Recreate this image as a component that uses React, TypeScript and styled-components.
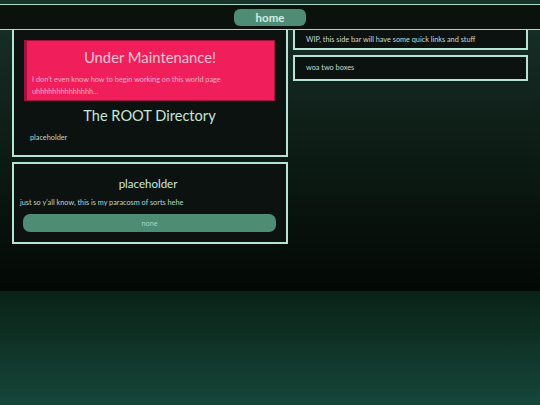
import styled, { createGlobalStyle } from "styled-components"

const GlobalStyle = createGlobalStyle`
    html {
        min-height: 100%;
        background: linear-gradient(
            to bottom,
            #18322b 0px,
            #0f2019 120px,
            #030805 291px,
            #0a2216 291px,
            #16463a 405px
        );
        background-repeat: no-repeat;
    }
    body {
        margin: 0;
        font-family: Lato, "Noto Sans", sans-serif;
        color: #c4e6da;
    }
`

const Header = styled.header`
    position: fixed;
    top: 4px;
    left: 0;
    right: 0;
    height: 24px;
    background: #0b120e;
    border-top: 1px solid #a8dcc8;
    border-bottom: 1px solid #a8dcc8;
    display: flex;
    align-items: center;
    justify-content: center;
    z-index: 10;
`

const HomePill = styled.a`
    width: 72px;
    height: 17px;
    border-radius: 6px;
    background: #4f8c75;
    color: #d2ece2;
    font-weight: 700;
    font-size: 11.5px;
    display: flex;
    align-items: center;
    justify-content: center;
    text-decoration: none;
`

const Layout = styled.main`
    display: grid;
    grid-template-columns: 276px 235px;
    gap: 5px;
    padding: 24px 12px 0;
    align-items: start;
`

const Column = styled.div`
    display: flex;
    flex-direction: column;
    gap: 5px;
`

const Box = styled.section`
    background: #0c120f;
    border: 2px solid #b6e4d4;
    box-sizing: border-box;
`

const MainBox = styled(Box)`
    padding: 14px 11px 12px 10px;
    height: 133px;
`

const InfoBox = styled(Box)`
    padding: 11px 10px 10px 6px;
    height: 82px;
    display: flex;
    flex-direction: column;
`

const SideBox = styled(Box)<{ $top: number; $height: number }>`
    padding: ${p => p.$top}px 11px 0;
    height: ${p => p.$height}px;
    font-size: 7.3px;
    line-height: 10px;
    color: #c6dcd4;
`

const Warning = styled.div`
    background: #f01e5a;
    border: 1px solid #a3123f;
    border-left-width: 3px;
    padding: 4px 6px 5px 5px;
    height: 61px;
    box-sizing: border-box;
    color: #f7b2c6;
`

const WarningTitle = styled.h2`
    margin: 0 0 5px;
    text-align: center;
    font-weight: 400;
    font-size: 14.8px;
    line-height: 24px;
    color: #f9c6d4;
`

const SmallText = styled.p`
    margin: 0;
    font-size: 7.3px;
    line-height: 12px;
`

const DirTitle = styled.h1`
    margin: 5px 0 6px;
    text-align: center;
    font-weight: 400;
    font-size: 14.6px;
    line-height: 20px;
    color: #c4e8da;
`

const Note = styled.p<{ $indent?: number }>`
    margin: 0;
    padding-left: ${p => p.$indent ?? 0}px;
    font-size: 7.3px;
    line-height: 12px;
    color: #bcd6cc;
`

const BoxTitle = styled.h3`
    margin: 0 0 4px;
    text-align: center;
    font-weight: 400;
    font-size: 11.5px;
    line-height: 18px;
    color: #cfeae0;
`

const WideButton = styled.button`
    margin: 5px 0 0 3px;
    height: 19px;
    border: none;
    border-radius: 7px;
    background: #4f8c75;
    color: #a9d6c4;
    font-family: inherit;
    font-size: 7.3px;
`

export default function App() {
    return (
        <>
            <GlobalStyle />
            <Header>
                <HomePill href="#">home</HomePill>
            </Header>
            <Layout>
                <Column>
                    <MainBox>
                        <Warning>
                            <WarningTitle>Under Maintenance!</WarningTitle>
                            <SmallText>
                                I don't even know how to begin working on this world page
                                <br />
                                uhhhhhhhhhhhhhh...
                            </SmallText>
                        </Warning>
                        <DirTitle>The ROOT Directory</DirTitle>
                        <Note $indent={6}>placeholder</Note>
                    </MainBox>
                    <InfoBox>
                        <BoxTitle>placeholder</BoxTitle>
                        <Note>just so y'all know, this is my paracosm of sorts hehe</Note>
                        <WideButton>none</WideButton>
                    </InfoBox>
                </Column>
                <Column>
                    <SideBox $top={9} $height={26}>
                        WIP, this side bar will have some quick links and stuff
                    </SideBox>
                    <SideBox $top={6} $height={26}>
                        woa two boxes
                    </SideBox>
                </Column>
            </Layout>
        </>
    )
}
